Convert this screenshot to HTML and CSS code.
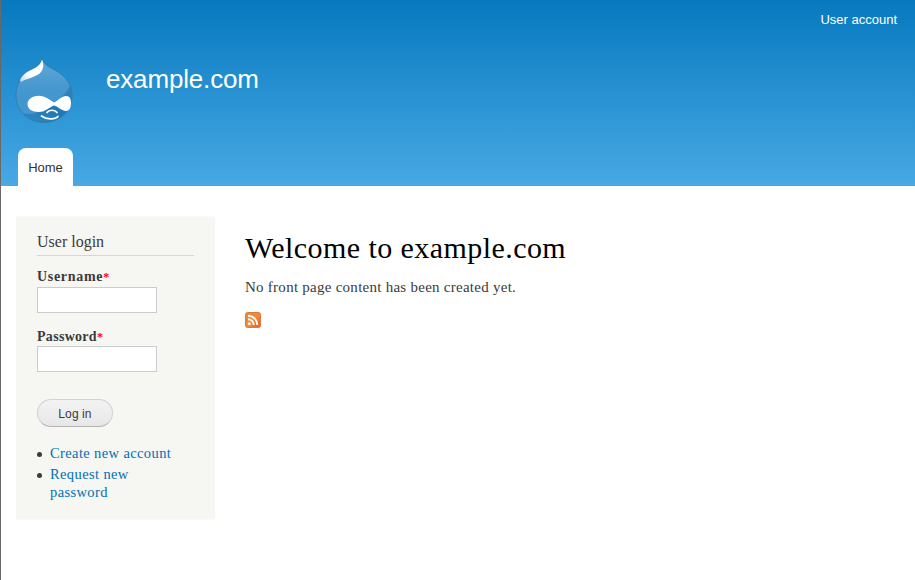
FILE: index.html
```html
<!DOCTYPE html>
<html lang="en">
<head>
<meta charset="utf-8">
<title>Welcome to example.com</title>
<link rel="stylesheet" href="styles.css">
</head>
<body>
<header class="header">
  <nav class="user-menu"><a href="#">User account</a></nav>
  <div class="branding">
    <svg class="logo" width="58" height="66" viewBox="0 0 58 66">
      <defs>
        <linearGradient id="drop" x1="0" y1="0" x2="0" y2="1"><stop offset="0" stop-color="#5fa9d7"/><stop offset=".5" stop-color="#4496ce"/><stop offset="1" stop-color="#3f97d2"/></linearGradient>
        <linearGradient id="shade" x1="1" y1="0" x2="0" y2="1"><stop offset="0" stop-color="#3485bf"/><stop offset=".5" stop-color="#1f78b5"/><stop offset="1" stop-color="#348bc6"/></linearGradient>
        <linearGradient id="shine" x1="1" y1="0" x2="0" y2="1"><stop offset="0" stop-color="#fff"/><stop offset=".65" stop-color="#fff"/><stop offset="1" stop-color="#b4d8ef"/></linearGradient>
        <clipPath id="outline"><path d="M27 1C29 6 33 9 40 12C51 18 57 27 57 37C57 53 45 64.500 29 64.500C13 64.500 1 53 1 37C1 26 7 17 16 12C22 9 26 6 27 1Z"/></clipPath>
      </defs>
      <g clip-path="url(#outline)">
        <rect width="58" height="66" fill="url(#drop)"/>
        <path d="M55 27C52 36 44 42 36 47C28 53 18 58 7 55C14 63 23 66 30 66C48 65 58 53 58 37C58 33 57 30 55 27Z" fill="url(#shade)"/>
      </g>
      <path d="M27 1C29 6 33 9 40 12C51 18 57 27 57 37C57 53 45 64.500 29 64.500C13 64.500 1 53 1 37C1 26 7 17 16 12C22 9 26 6 27 1Z" fill="none" stroke="#2f6f9c" stroke-opacity=".6"/>
      <path d="M27 1.500C29 7 29 12 24 16C18 20 10 21 6 24C3 22 9 15 16 12C23 9 26 6 27 1.500Z" fill="url(#shine)"/>
      <path d="M24 37.700C30 37.700 35 42 39 44.500C43 42.500 47 38 51 38C55 38 56 41 56 45C56 50 54 53 51 53C47 53 43 48.500 39 47.500C34 49 31 54 24 54C17 54 12.500 51 12.500 46C12.500 41 18 37.700 24 37.700Z" fill="#fff"/>
      <path d="M32 54.500C34 51.500 40 51.500 42 54.500M26.500 58C31 61.500 40 62 43 58.500" fill="none" stroke="#fff" stroke-width="1.700" stroke-linecap="round"/>
    </svg>
    <div class="site-name">example.com</div>
  </div>
  <nav class="tabs"><a class="tab" href="#">Home</a></nav>
</header>
<div class="columns">
  <aside class="login">
    <h2 class="login-title">User login</h2>
    <form>
      <label class="label label-user" for="user">Username<span class="required">*</span></label>
      <input class="field" id="user" type="text">
      <label class="label label-pass" for="pass">Password<span class="required">*</span></label>
      <input class="field" id="pass" type="password">
      <button class="submit" type="button">Log in</button>
    </form>
    <ul class="links">
      <li><a href="#">Create new account</a></li>
      <li><a href="#">Request new<br>password</a></li>
    </ul>
  </aside>
  <main class="content">
    <h1 class="title">Welcome to example.com</h1>
    <p class="message">No front page content has been created yet.</p>
    <a class="feed" href="#"><svg width="16" height="16" viewBox="0 0 16 16">
      <defs><linearGradient id="rss" x1="0" y1="0" x2="1" y2="1"><stop offset="0" stop-color="#e98538"/><stop offset=".5" stop-color="#f28c38"/><stop offset="1" stop-color="#d9622c"/></linearGradient></defs>
      <rect x=".5" y=".5" width="15" height="15" rx="2" fill="url(#rss)" stroke="#e0783a"/>
      <circle cx="4.300" cy="11.700" r="1.500" fill="#fff"/>
      <path d="M3 7.200A5.800 5.800 0 0 1 8.800 13M3 3.700A9.300 9.300 0 0 1 12.300 13" fill="none" stroke="#fff" stroke-width="1.900"/>
    </svg></a>
  </main>
</div>
</body>
</html>
```
FILE: styles.css
```css
* { box-sizing: border-box; }
body {
  margin: 0;
  min-height: 580px;
  border-left: 1px solid #686868;
  background: #fff;
  color: #3b3b3b;
  font-family: "Liberation Serif", serif;
  overflow: hidden;
}
a { color: #0071b3; text-decoration: none; }
.header {
  display: flex;
  flex-direction: column;
  height: 186px;
  background: linear-gradient(#0779bf, #48a9e4);
  font-family: "Liberation Sans", sans-serif;
}
.user-menu { height: 58px; padding: 12px 18px 0 0; text-align: right; font-size: 13px; line-height: 16px; }
.user-menu a { color: #fff; }
.branding { display: flex; height: 90px; padding-left: 14px; }
.logo { display: block; }
.site-name { margin: 5px 0 0 33px; color: #fff; font-size: 26px; line-height: 32px; letter-spacing: -0.17px; }
.tabs { display: flex; padding-left: 17px; }
.tab {
  width: 55px;
  height: 38px;
  border-radius: 8px 8px 0 0;
  background: #fff;
  color: #333;
  font-size: 13px;
  line-height: 39px;
  text-align: center;
}
.columns { display: flex; align-items: flex-start; padding: 30px 0 0 15px; }
.login { width: 199px; height: 304px; padding: 15px 21px 0; background: #f6f6f2; border: 1px solid #f9f9f7; border-width: 1px 0; }
.login-title {
  height: 24px;
  margin: 0 0 12px;
  border-bottom: 1px solid #d6d6d6;
  font-size: 16px;
  font-weight: normal;
  line-height: 19px;
}
.label { display: block; height: 19px; font-size: 14px; font-weight: bold; line-height: 18px; }
.label-user { letter-spacing: 0.7px; }
.label-pass { margin-top: 15px; height: 18px; letter-spacing: 0.3px; }
.required { color: #f00; font-size: 12px; letter-spacing: 0; }
.field { display: block; width: 120px; height: 26px; margin: 0; padding: 4px; border: 1px solid #ccc; background: #fff; }
.submit {
  display: block;
  width: 76px;
  height: 28px;
  margin-top: 27px;
  padding: 1px 0 0;
  border: 1px solid #d2d2d2;
  border-bottom-color: #b4b4b4;
  border-radius: 14px;
  background: linear-gradient(#f3f3f3, #e7e7e7);
  color: #3a3a3a;
  font: 12px "Liberation Sans", sans-serif;
  letter-spacing: 0.1px;
}
.links { margin: 17px 0 0; padding-left: 13px; list-style: none; font-size: 14.500px; line-height: 18px; letter-spacing: 0.38px; }
.links li { position: relative; margin-bottom: 3px; }
.links li::before { content: ""; position: absolute; left: -13px; top: 8px; width: 5px; height: 5px; border-radius: 50%; background: #3b3b3b; }
.content { padding: 14px 0 0 30px; }
.title { margin: 0; color: #000; font-size: 30px; font-weight: normal; line-height: 36px; letter-spacing: 0.43px; white-space: nowrap; }
.message { margin: 11px 0 0; font-size: 15px; line-height: 20px; letter-spacing: 0.26px; }
.feed { display: block; margin-top: 15px; height: 16px; }
.feed svg { display: block; }
```
